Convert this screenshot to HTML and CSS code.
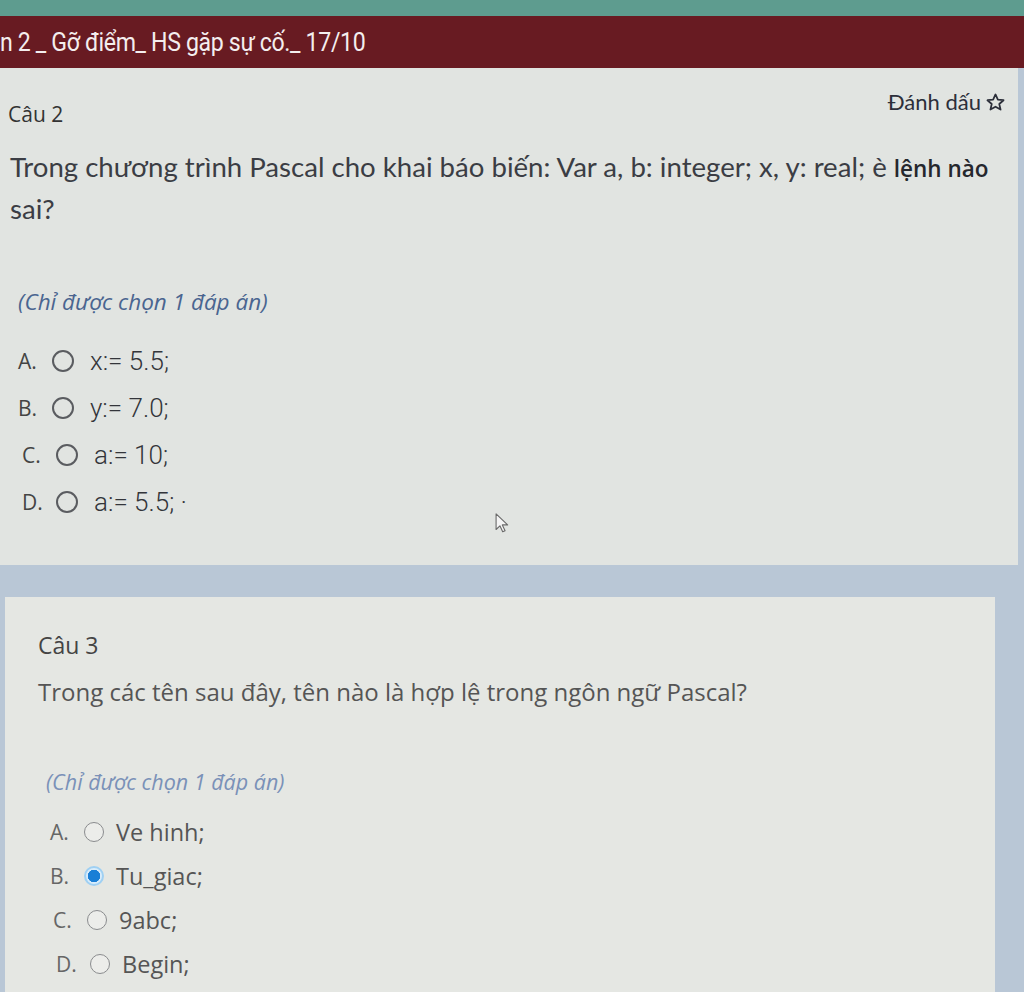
FILE: index.html
```html
<!DOCTYPE html>
<html lang="vi">
<head>
<meta charset="utf-8">
<title>Bài kiểm tra</title>
<link rel="stylesheet" href="styles.css">
</head>
<body>
<div class="topstrip"></div>
<div class="titlebar"><span class="titletext">n 2 _ Gỡ điểm_ HS gặp sự cố._ 17/10</span></div>
<main class="page">
  <section class="card card1">
    <div class="qhead">
      <div class="qnum">Câu 2</div>
      <div class="mark">Đánh dấu
        <svg class="star" viewBox="0 0 24 24" width="21" height="21"><path d="M12 2.8l2.7 6 6.5.6-4.9 4.3 1.5 6.4L12 16.8l-5.8 3.3 1.5-6.4-4.9-4.3 6.5-.6z" fill="none" stroke="#2c2f3a" stroke-width="2" stroke-linejoin="round"/></svg>
      </div>
    </div>
    <p class="qtext">Trong chương trình Pascal cho khai báo biến: Var a, b: integer; x, y: real; è <span class="strong">lệnh nào</span><br>sai?</p>
    <p class="note">(Chỉ được chọn 1 đáp án)</p>
    <ul class="opts">
      <li class="opt"><span class="lbl">A.</span><span class="radio"></span><span class="otext">x:= 5.5;</span></li>
      <li class="opt"><span class="lbl">B.</span><span class="radio"></span><span class="otext">y:= 7.0;</span></li>
      <li class="opt shift"><span class="lbl">C.</span><span class="radio"></span><span class="otext">a:= 10;</span></li>
      <li class="opt shift"><span class="lbl">D.</span><span class="radio"></span><span class="otext">a:= 5.5; ·</span></li>
    </ul>
    <svg class="cursor" viewBox="0 0 16 24" width="15" height="22"><path d="M1 1v17l4.2-4 3 6.5 2.6-1.2-3-6.3h5.8z" fill="#f4f4f4" stroke="#6a6a6a" stroke-width="1.2" stroke-linejoin="round"/></svg>
  </section>
  <section class="card card2">
    <div class="qnum2">Câu 3</div>
    <p class="qtext2">Trong các tên sau đây, tên nào là hợp lệ trong ngôn ngữ Pascal?</p>
    <p class="note2">(Chỉ được chọn 1 đáp án)</p>
    <ul class="opts2">
      <li class="opt2"><span class="lbl2">A.</span><span class="radio2"></span><span class="otext2">Ve hinh;</span></li>
      <li class="opt2"><span class="lbl2">B.</span><span class="radio2 checked"></span><span class="otext2">Tu_giac;</span></li>
      <li class="opt2 s1"><span class="lbl2">C.</span><span class="radio2"></span><span class="otext2">9abc;</span></li>
      <li class="opt2 s2"><span class="lbl2">D.</span><span class="radio2"></span><span class="otext2">Begin;</span></li>
    </ul>
  </section>
</main>
</body>
</html>
```

FILE: styles.css
```css
* { box-sizing: border-box; }
html, body { margin: 0; padding: 0; }
body {
  width: 1024px;
  height: 992px;
  overflow: hidden;
  background: #b9c7d6;
  font-family: "Open Sans", "DejaVu Sans", sans-serif;
  color: #333;
}
.topstrip { height: 16px; background: #5e9c8f; }
.titlebar {
  height: 52px;
  background: #681b22;
  color: #f4eeee;
  white-space: nowrap;
  display: flex;
  align-items: center;
}
.titletext {
  display: inline-block;
  font-family: "Roboto", "Liberation Sans", sans-serif;
  font-size: 26px;
  letter-spacing: -0.4px;
  transform: scaleX(0.89);
  transform-origin: left center;
}
.page { display: flex; flex-direction: column; gap: 32px; }
.card { position: relative; }
.card1 {
  background: #e1e4e1;
  margin-right: 6px;
  height: 497px;
  padding: 0 6px 0 8px;
}
.qhead { display: flex; justify-content: space-between; align-items: flex-start; }
.qnum { margin-top: 32px; font-size: 21px; line-height: 28px; color: #333; }
.mark {
  margin-top: 22px;
  font-family: "Lato", "Open Sans", sans-serif;
  font-size: 22px;
  line-height: 24px;
  color: #2c2f3a;
  display: flex;
  align-items: center;
  gap: 4px;
  padding-right: 6px;
}
.star { display: block; }
.qtext {
  margin: 19px 0 0 2px;
  font-family: "Lato", "Open Sans", sans-serif;
  font-size: 27.6px;
  line-height: 40px;
  color: #3b3d44;
}
.strong { font-family: "Open Sans", sans-serif; font-size: 22.5px; font-weight: 600; color: #25272d; }
.note {
  margin: 58px 0 0 10px;
  font-style: italic;
  font-size: 22.5px;
  line-height: 30px;
  color: #4a6590;
}
.opts { list-style: none; margin: 20px 0 0 10px; padding: 0; }
.opt { display: flex; align-items: center; height: 47px; }
.opt.shift { padding-left: 4px; }
.lbl { width: 34px; font-size: 21px; color: #444; }
.radio {
  width: 22px; height: 22px;
  border: 2px solid #5a5c60;
  border-radius: 50%;
  margin-right: 16px;
}
.otext { font-family: "Roboto", "Liberation Sans", sans-serif; font-weight: 300; font-size: 26px; color: #33353a; }
.cursor { position: absolute; left: 495px; top: 445px; }

.card2 {
  background: #e5e7e3;
  margin-left: 5px;
  margin-right: 29px;
  height: 400px;
  padding: 34px 0 0 33px;
}
.qnum2 { font-size: 23px; line-height: 28px; color: #444; }
.qtext2 { margin: 18px 0 0 0; font-size: 24px; line-height: 30px; color: #555; }
.note2 { margin: 62px 0 0 8px; font-style: italic; font-size: 21.5px; line-height: 26px; color: #7a91b8; }
.opts2 { list-style: none; margin: 15px 0 0 12px; padding: 0; }
.opt2 { display: flex; align-items: center; height: 44px; }
.opt2.s1 { padding-left: 3px; }
.opt2.s2 { padding-left: 6px; }
.lbl2 { width: 34px; font-size: 21px; color: #666; }
.radio2 {
  width: 20px; height: 20px;
  border: 1.5px solid #8a8c8e;
  border-radius: 50%;
  margin-right: 12px;
  background: #ecedea;
}
.radio2.checked {
  border: 2px solid #9fd0f3;
  background: radial-gradient(circle, #1a7fd6 0 6px, #d8ecfb 6.5px);
}
.otext2 { font-size: 23.5px; color: #555; }
```
